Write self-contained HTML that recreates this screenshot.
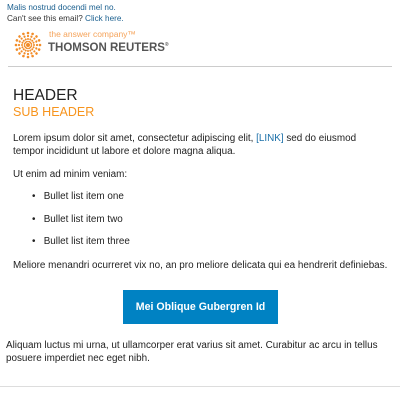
<!DOCTYPE html>
<html><head><style>
body{margin:0;width:400px;height:400px;background:#fff;font-family:"Liberation Sans",Arial,sans-serif;color:#222;position:relative;overflow:hidden}
.a{position:absolute;white-space:nowrap}
.t{font-size:9.9px;line-height:12.5px}
</style></head><body>
<div class="a" style="left:7px;top:3px;font-size:8.2px;line-height:10.5px;color:#1a5f8f">Malis nostrud docendi mel no.<br><span style="color:#333">Can't see this email?</span> Click here.</div>
<svg class="a" style="left:14px;top:31px" width="28" height="28" viewBox="0 0 28 28">
<g fill="#f28c28">
<circle cx="14" cy="14" r="2"/>
<g id="r"><circle cx="14" cy="2" r="1.3"/><circle cx="14" cy="5" r="1.1"/><circle cx="14" cy="8" r="1"/><circle cx="14" cy="10.5" r="0.8"/></g>
<use href="#r" transform="rotate(22.5 14 14)"/><use href="#r" transform="rotate(45 14 14)"/><use href="#r" transform="rotate(67.5 14 14)"/><use href="#r" transform="rotate(90 14 14)"/><use href="#r" transform="rotate(112.5 14 14)"/><use href="#r" transform="rotate(135 14 14)"/><use href="#r" transform="rotate(157.5 14 14)"/><use href="#r" transform="rotate(180 14 14)"/><use href="#r" transform="rotate(202.5 14 14)"/><use href="#r" transform="rotate(225 14 14)"/><use href="#r" transform="rotate(247.5 14 14)"/><use href="#r" transform="rotate(270 14 14)"/><use href="#r" transform="rotate(292.5 14 14)"/><use href="#r" transform="rotate(315 14 14)"/><use href="#r" transform="rotate(337.5 14 14)"/>
</g></svg>
<div class="a" style="left:49px;top:29px;font-size:8.5px;color:#f5a35a">the answer company™</div>
<div class="a" style="left:48px;top:42px;font-size:11.5px;font-weight:bold;color:#555">THOMSON REUTERS<span style="font-size:5px;vertical-align:top">®</span></div>
<div class="a" style="left:8px;top:66px;width:384px;height:1px;background:#ccc"></div>
<div class="a" style="left:13px;top:87px;font-size:15.5px;color:#222">HEADER</div>
<div class="a" style="left:13px;top:105px;font-size:12.5px;color:#f7941d">SUB HEADER</div>
<div class="a t" style="left:13px;top:133px">Lorem ipsum dolor sit amet, consectetur adipiscing elit, <span style="color:#1a6fa8">[LINK]</span> sed do eiusmod<br>tempor incididunt ut labore et dolore magna aliqua.</div>
<div class="a t" style="left:13px;top:169px">Ut enim ad minim veniam:</div>
<div class="a t" style="left:32px;top:191px">•&nbsp;&nbsp; Bullet list item one</div>
<div class="a t" style="left:32px;top:214px">•&nbsp;&nbsp; Bullet list item two</div>
<div class="a t" style="left:32px;top:236px">•&nbsp;&nbsp; Bullet list item three</div>
<div class="a t" style="left:13px;top:260px">Meliore menandri ocurreret vix no, an pro meliore delicata qui ea hendrerit definiebas.</div>
<div class="a" style="left:123px;top:290px;width:155px;height:34px;background:#0082c3;color:#fff;font-weight:bold;font-size:10.6px;line-height:34px;text-align:center">Mei Oblique Gubergren Id</div>
<div class="a t" style="left:6px;top:340px">Aliquam luctus mi urna, ut ullamcorper erat varius sit amet. Curabitur ac arcu in tellus<br>posuere imperdiet nec eget nibh.</div>
<div class="a" style="left:0;top:386px;width:400px;height:1px;background:#ddd"></div>
</body></html>
